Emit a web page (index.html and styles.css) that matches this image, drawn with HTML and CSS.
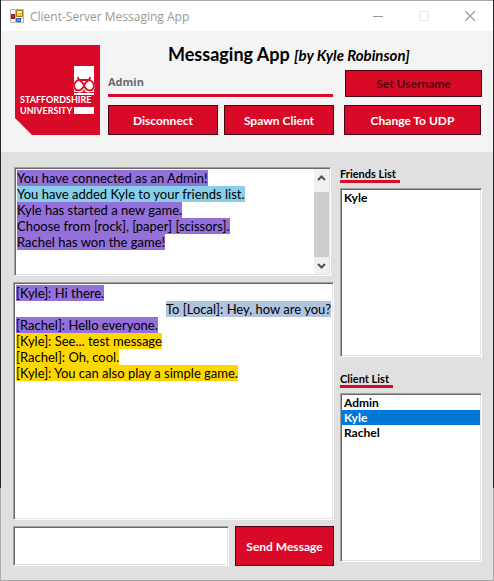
FILE: index.html
```html
<!DOCTYPE html>
<html lang="en">
<head>
<meta charset="utf-8">
<title>Client-Server Messaging App</title>
<link rel="stylesheet" href="styles.css">
</head>
<body>
<div class="window">
  <div class="titlebar">
    <svg class="app-icon" viewBox="0 0 14 14" aria-hidden="true">
      <path fill="#fff" stroke="#b4b4b4" d="M.5 .5h13v13H.5zM.5 9.5h13M5.5 .5v13"/>
      <path fill="#f6c945" stroke="#a87908" d="M6.500 1.500h6v6h-6z"/>
      <path fill="#fff0a0" d="M7 2h5v2H7z"/>
      <path fill="#d02a20" stroke="#7d1510" d="M1.500 5.500h3v4h-3z"/>
      <path fill="#5b9cf0" stroke="#2463b8" d="M6.500 9.500h4v3h-4z"/>
    </svg>
    <span class="caption">Client-Server Messaging App</span>
    <button class="win-button" aria-label="Minimize"><svg viewBox="0 0 10 10"><path stroke="#999" d="M0 5.500h10"/></svg></button>
    <button class="win-button" aria-label="Maximize" disabled><svg viewBox="0 0 10 10"><path fill="none" stroke="#e6e6e6" d="M.5 .5h9v9h-9z"/></svg></button>
    <button class="win-button" aria-label="Close"><svg viewBox="0 0 10 10"><path stroke="#8c8c8c" stroke-width="1.100" d="M0 0l10 10M10 0L0 10"/></svg></button>
  </div>

  <header class="header">
    <svg class="logo" viewBox="0 0 85 90" role="img" aria-label="Staffordshire University">
      <path fill="#d80a27" d="M0 0h85v90H17L0 73z"/>
      <path fill="#fff" d="M59 21h20v26H59zM59 48h20v2H59zM59 62h20v7H59z"/>
      <ellipse fill="#fff" cx="64.500" cy="41.500" rx="6.500" ry="6"/>
      <ellipse fill="#fff" cx="73.500" cy="41.500" rx="6.500" ry="6"/>
      <path fill="none" stroke="#d80a27" stroke-width="1.800" d="M63 32l.5 3M75 32l-.5 3M69 40c-2-3-4-5-5.500-5M69 40c2-3 4-5 5.500-5M64 35h10M63.500 35c-4 2-5 5-4 8 2 4 8 3 9.500-3M74.500 35c4 2 5 5 4 8-2 4-8 3-9.500-3"/>
      <path fill="#d80a27" d="M67 48l2-4 2 4z"/>
      <g class="logo-text">
        <text x="5" y="58">STAFFORDSHIRE</text>
        <text x="5" y="69">UNIVERSITY</text>
      </g>
    </svg>
    <div class="controls">
      <h1 class="title">Messaging App <em class="author">[by Kyle Robinson]</em></h1>
      <div class="user-row">
        <input class="username" type="text" value="Admin" aria-label="Username">
        <button class="action" disabled>Set Username</button>
      </div>
      <div class="button-row">
        <button class="action">Disconnect</button>
        <button class="action">Spawn Client</button>
        <button class="action action-wide">Change To UDP</button>
      </div>
    </div>
  </header>

  <main class="content">
    <section class="messages">
      <div class="log log-server sunken">
        <div class="lines">
          <p><span class="purple">You have connected as an Admin!</span></p>
          <p><span class="sky">You have added Kyle to your friends list.</span></p>
          <p><span class="purple">Kyle has started a new game.</span></p>
          <p><span class="purple">Choose from [rock], [paper] [scissors].</span></p>
          <p><span class="purple">Rachel has won the game!</span></p>
        </div>
        <div class="scrollbar" aria-hidden="true">
          <svg viewBox="0 0 15 17"><path d="M4 11l3.500-3.500L11 11"/></svg>
          <div class="thumb"></div>
          <svg viewBox="0 0 15 17"><path d="M4 7l3.500 3.500L11 7"/></svg>
        </div>
      </div>
      <div class="log log-chat sunken">
        <div class="lines">
          <p><span class="purple">[Kyle]: Hi there.</span></p>
          <p class="own"><span class="steel">To [Local]: Hey, how are you?</span></p>
          <p><span class="purple">[Rachel]: Hello everyone.</span></p>
          <p><span class="gold">[Kyle]: See... test message</span></p>
          <p><span class="gold">[Rachel]: Oh, cool.</span></p>
          <p><span class="gold">[Kyle]: You can also play a simple game.</span></p>
        </div>
      </div>
      <form class="compose">
        <textarea class="message sunken" aria-label="Message"></textarea>
        <button class="action send" type="button">Send Message</button>
      </form>
    </section>
    <aside class="people">
      <label class="list-title" for="friends">Friends List</label>
      <select class="list sunken" id="friends" size="8">
        <option>Kyle</option>
      </select>
      <label class="list-title" for="clients">Client List</label>
      <select class="list sunken" id="clients" size="8">
        <option>Admin</option>
        <option selected>Kyle</option>
        <option>Rachel</option>
      </select>
    </aside>
  </main>
</div>
</body>
</html>
```
FILE: styles.css
```css
* {
  box-sizing: border-box;
}

body {
  margin: 0;
  padding: 0 1px;
  background: linear-gradient(#25262b 84%, #aaa 84%);
  font-family: "Century Gothic", "URW Gothic", Lato, "Open Sans", sans-serif;
  color: #000;
}

button,
input,
select,
textarea {
  font: inherit;
}

h1,
p {
  margin: 0;
}

.window {
  display: flex;
  flex-direction: column;
  min-height: 100vh;
  border: solid #a8a8a8;
  border-width: 1px 0;
  background: #e0e0e0;
}

.titlebar {
  display: flex;
  align-items: center;
  height: 30px;
  padding-left: 9px;
  background: #fff;
}

.app-icon {
  width: 14px;
  height: 14px;
}

.caption {
  flex: 1;
  margin-left: 6px;
  color: #999;
  font: 12px "Segoe UI", "Open Sans", sans-serif;
}

.win-button {
  display: flex;
  align-items: center;
  justify-content: center;
  width: 46px;
  height: 30px;
  padding: 0;
  border: 0;
  background: none;
}

.win-button svg {
  width: 10px;
  height: 10px;
}

.header {
  display: flex;
  gap: 8px;
  padding: 14px 11px 17px 14px;
  background: #f4f4f4;
}

.logo {
  flex: none;
  width: 85px;
  height: 90px;
}

.logo-text {
  fill: #fff;
  font: bold 9px Lato, sans-serif;
}

.controls {
  flex: 1;
  min-width: 0;
  display: flex;
  flex-direction: column;
}

.title {
  height: 25px;
  padding-left: 60px;
  font-size: 18px;
  line-height: 18px;
  white-space: nowrap;
}

.author {
  font-size: 15px;
}

.user-row {
  display: flex;
  gap: 12px;
  margin-bottom: 8px;
}

.username {
  flex: 1;
  min-width: 0;
  height: 27px;
  padding: 0 0 2px;
  border: 0;
  border-bottom: 3px solid #d80a27;
  background: none;
  color: #696969;
  font: bold 11px "Open Sans", sans-serif;
}

.button-row {
  display: flex;
  gap: 6px;
  margin-right: 1px;
}

.button-row .action {
  flex: 1;
  height: 30px;
}

.action {
  width: 137px;
  padding: 0;
  border: 1px solid #4a0610;
  background: #d80a27;
  color: #fff;
  font-size: 12px;
  font-weight: bold;
}

.button-row .action-wide {
  flex: 0 0 137px;
  margin-left: 4px;
}

.action:disabled {
  color: #4a0610;
}

.content {
  flex: 1;
  display: grid;
  grid-template-columns: 1fr 142px;
  gap: 6px;
  padding: 15px 11px 14px 12px;
}

.sunken {
  border: 1px solid;
  border-color: #a0a0a0 #fff #fff #a0a0a0;
  border-radius: 0;
  background: #fff;
  box-shadow: inset 1px 1px #696969, inset -1px -1px #e3e3e3;
}

.messages {
  display: flex;
  flex-direction: column;
  gap: 6px;
}

.log {
  display: flex;
  padding: 2px;
  font-size: 13px;
  line-height: 16px;
}

.log-server {
  height: 109px;
  margin: 0 3px 0 1px;
  padding: 1px 1px 1px 2px;
}

.log-server .lines {
  padding-top: 1px;
}

.log-chat {
  flex: 1;
}

.lines {
  flex: 1;
}

.lines span {
  display: inline-block;
}

.own {
  text-align: right;
}

.purple {
  background: #9370db;
}

.sky {
  background: #87ceeb;
}

.steel {
  background: #b0c4de;
}

.gold {
  background: #ffd700;
}

.scrollbar {
  display: flex;
  flex-direction: column;
  width: 15px;
  background: #f0f0f0;
}

.scrollbar svg {
  width: 15px;
  height: 17px;
  fill: none;
  stroke: #505050;
  stroke-width: 2;
}

.thumb {
  flex: 1;
  margin-top: 6px;
  background: #cdcdcd;
}

.compose {
  display: flex;
  gap: 6px;
}

.message {
  flex: 1;
  min-width: 0;
  height: 40px;
  padding: 3px;
  resize: none;
}

.send {
  width: 99px;
}

.people {
  display: flex;
  flex-direction: column;
  align-items: flex-start;
}

.list-title {
  height: 16px;
  padding-right: 4px;
  border-bottom: 3px solid #d80a27;
  font-size: 11px;
  font-weight: bold;
  line-height: 13px;
}

.list {
  width: 100%;
  height: 169px;
  margin: 5px 0 15px;
  padding: 1px;
  overflow: hidden;
  font-size: 12px;
}

.list:last-child {
  margin-bottom: 0;
}

.list option {
  min-height: 15px;
  padding: 0 2px;
  font-weight: bold;
  line-height: 15px;
}

.list option:checked {
  background: #0078d7 linear-gradient(#0078d7, #0078d7);
  color: #fff;
}
```
